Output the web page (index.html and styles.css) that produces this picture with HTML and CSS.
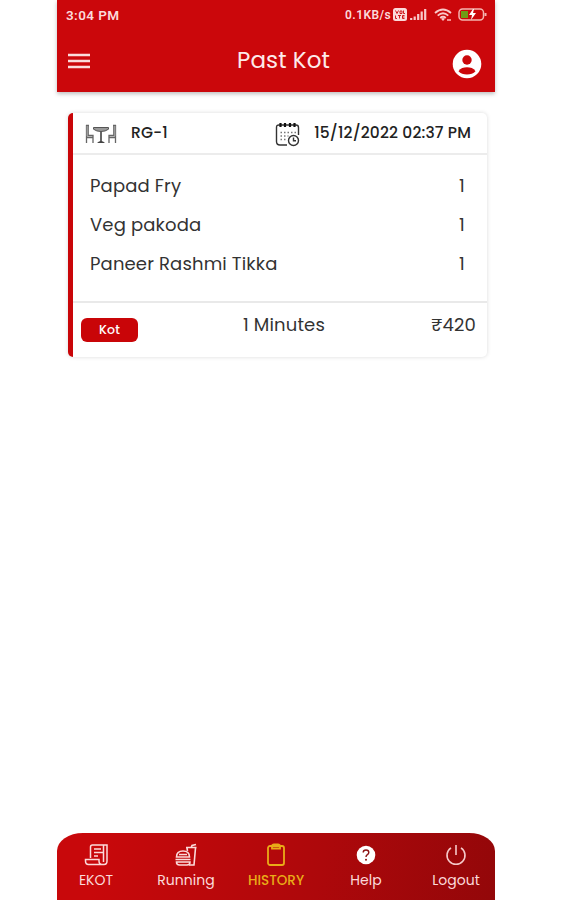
FILE: index.html
```
<!DOCTYPE html>
<html lang="en">
<head>
  <meta charset="UTF-8" />
  <meta name="viewport" content="width=device-width, initial-scale=1" />
  <title>Past Kot</title>
  <link rel="stylesheet" href="styles.css">
</head>
<body>
  <div class="phone">
    <header>
      <div class="status">
        <span class="time">3:04 PM</span>
        <span class="speed">0.1KB/s</span>
        <svg class="volte" width="14" height="13" viewBox="0 0 14 13">
          <rect width="14" height="13" rx="2.5" fill="#fbdada"/>
          <path d="M2.5 2.5l1.500 3 1.500-3M7 3h2v2.500H7zM10.500 2.500v3H12M2.500 7.500v3H4M5 7.500h3M6.500 7.500v3M11.500 7.500h-2v3h2M9.500 9h2" fill="none" stroke="#cb070b" stroke-width=".9"/>
        </svg>
        <svg class="signal" width="17" height="13" viewBox="0 0 17 13">
          <path d="M1.200 10v2M4.700 8.500V12M8.200 6v6M11.700 3.500V12M15.200 1v11" stroke="#f9c9c9" stroke-width="2.200"/>
        </svg>
        <svg class="wifi" width="18" height="14" viewBox="0 0 18 14">
          <path d="M1 5Q9-2 17 5M3.700 7.600Q9 3 14.300 7.600M6.200 10Q9 7.600 11.800 10" fill="none" stroke="#f9c9c9" stroke-width="1.800"/>
          <path d="M9 13l-2-2.200q2-1.600 4 0z" fill="#f9c9c9"/>
          <path d="M13 12h4" stroke="#f58a8a" stroke-width="2"/>
        </svg>
        <svg class="battery" width="30" height="13" viewBox="0 0 30 13">
          <rect x="1" y="1" width="24.500" height="11" rx="3.500" fill="none" stroke="#f4b5b0" stroke-width="1.500"/>
          <path d="M3 3h7v7H3z" fill="#6f9a16"/>
          <path d="M27.500 5v3" stroke="#f4b5b0" stroke-width="2"/>
          <path d="M15 1l-4 6h3l-1 5 5-7h-3l1-4z" fill="#fff"/>
        </svg>
      </div>
      <div class="bar">
        <svg class="menu" width="22" height="16" viewBox="0 0 22 16">
          <path d="M0 2h22M0 8h22M0 14h22" stroke="#fbdcdc" stroke-width="2.700"/>
        </svg>
        <h1>Past Kot</h1>
        <svg class="user" width="30" height="30" viewBox="0 0 30 30">
          <circle cx="15" cy="15" r="14.300" fill="#fff"/>
          <circle cx="15" cy="11" r="4.700" fill="#cb070b"/>
          <path d="M6.500 22.200c2-3 5-3.900 8.500-3.900s6.500.9 8.500 3.900c-2 2.400-5 3.200-8.500 3.200s-6.500-.8-8.500-3.200z" fill="#cb070b"/>
        </svg>
      </div>
    </header>

    <main>
      <div class="card">
        <div class="card-head">
          <svg class="table" width="32" height="20" viewBox="0 0 32 20">
            <g fill="none" stroke="#666" stroke-width="1.300">
              <path d="M1.500 1v18M3.200 2v9M1 1.500h3M2 11.500h6V19M2 13.500h6M30.500 1v18M28.800 2v9M31 1.500h-3M30 11.500h-6V19M30 13.500h-6"/>
              <path d="M16 7v11" stroke-width="2"/>
            </g>
            <path d="M2.300 2v10M29.700 2v10" stroke="#999" stroke-width="1.500"/>
            <path d="M8.500 3.500h15v1.700q-3 2.300-7.500 2.300t-7.500-2.300z" fill="#999" stroke="#555"/>
            <path d="M12 19q4-4 8 0z" fill="#444"/>
          </svg>
          <span class="table-name">RG-1</span>
          <svg class="calendar" width="25" height="25" viewBox="0 0 25 25">
            <g fill="none" stroke="#333" stroke-width="1.400">
              <path d="M12 23H5q-3.500 0-3.500-3.500V5.500Q1.500 3 4 3h17q2.500 0 2.500 2.500V13"/>
              <circle cx="18.500" cy="18.500" r="5"/>
              <path d="M18.500 15.500v3.200H21"/>
            </g>
            <path d="M5.500 1v4M10 1v4M15 1v4M19.500 1v4" stroke="#111" stroke-width="2.200"/>
            <path d="M5.500 10.500H21M5.500 14h8M5.500 17.500h6" stroke="#777" stroke-width="1.500" stroke-dasharray="1.500 2"/>
          </svg>
          <span class="date">15/12/2022 02:37 PM</span>
        </div>
        <ul class="items">
          <li><span>Papad Fry</span><span>1</span></li>
          <li><span>Veg pakoda</span><span>1</span></li>
          <li><span>Paneer Rashmi Tikka</span><span>1</span></li>
        </ul>
        <div class="card-foot">
          <span class="badge">Kot</span>
          <span class="minutes">1 Minutes</span>
          <span class="price">₹420</span>
        </div>
      </div>
    </main>

    <nav>
      <a class="tab">
        <svg width="24" height="24" viewBox="0 0 24 24" fill="none" stroke="#fbdada" stroke-width="1.500">
          <path d="M6.500 15V4q0-2 2-2H23v16q0 3.500-3 3.500H4.500q-3 0-3-3.500v-1.500H15V18q0 3.500 3 3.500"/>
          <path d="M19.500 2v17M10 6h7M10 9.500h9M10 13h4"/>
        </svg>
        <span>EKOT</span>
      </a>
      <a class="tab">
        <svg width="24" height="24" viewBox="0 0 24 24" fill="none" stroke="#fbdada" stroke-width="1.600">
          <path d="M2.500 14q0-6 6.500-6t6.500 6zM1.500 16.500h15M2.500 19h13.500q0 3-3 3H5.500q-3 0-3-3z"/>
          <path d="M5 11.500h8M12 4.500h10.500M13 5l.5 3M21.500 5L20 22h-5M17 5l1-2.500 4-1"/>
        </svg>
        <span>Running</span>
      </a>
      <a class="tab active">
        <svg width="24" height="24" viewBox="0 0 24 24" fill="none" stroke="#e9ac18" stroke-width="1.800">
          <rect x="4" y="3" width="16" height="19" rx="2"/>
          <path d="M8 3v2.500h8V3q0-1.500-2-1.500h-4Q8 1.500 8 3z"/>
        </svg>
        <span>HISTORY</span>
      </a>
      <a class="tab">
        <svg width="24" height="24" viewBox="0 0 24 24">
          <circle cx="12" cy="12" r="9.300" fill="#fff"/>
          <path d="M9.200 9.500Q9.200 7 12 7t2.800 2.500q0 1.300-1.400 2.200T12 14" fill="none" stroke="#8d1414" stroke-width="1.400"/>
          <circle cx="12" cy="16.700" r="1" fill="#8d1414"/>
        </svg>
        <span>Help</span>
      </a>
      <a class="tab">
        <svg width="24" height="24" viewBox="0 0 24 24" fill="none" stroke="#f5caca" stroke-width="1.600">
          <path d="M12 2v10M7 4.800a9 9 0 1 0 10 0"/>
        </svg>
        <span>Logout</span>
      </a>
    </nav>
  </div>
</body>
</html>
```
FILE: styles.css
```
* {
  box-sizing: border-box;
}
body {
  margin: 0;
  background: #fff;
  font-family: "Poppins", Inter, sans-serif;
}
.phone {
  width: 438px;
  height: 900px;
  margin-left: 57px;
  display: flex;
  flex-direction: column;
  white-space: nowrap;
}
header {
  height: 92px;
  background: #cb070b;
  color: #fff;
  box-shadow: 0 2px 4px rgba(0,0,0,0.25);
}
.status {
  height: 29px;
  padding: 0 7px 0 9px;
  display: flex;
  align-items: center;
  font-family: Roboto, sans-serif;
  font-weight: 600;
  color: #fbdada;
}
.time {
  flex: 1;
  font-size: 13.5px;
  letter-spacing: 0.4px;
}
.speed {
  font-size: 12px;
  letter-spacing: 0.4px;
}
.volte {
  margin-left: 2px;
}
.signal {
  margin-left: 3px;
}
.wifi {
  margin-left: 7px;
}
.battery {
  margin-left: 6px;
}
.bar {
  height: 63px;
  padding: 0 13px 0 11px;
  display: flex;
  align-items: center;
}
.bar h1 {
  flex: 1;
  margin: 0 0 2px 25px;
  color: #fdeaea;
  font-size: 23px;
  font-weight: 400;
  letter-spacing: 0.1px;
  text-align: center;
}
.user {
  margin-top: 7px;
}
main {
  flex: 1;
  padding: 21px 8px 0 11px;
}
.card {
  height: 244px;
  border-left: 5px solid #c90508;
  border-radius: 5px;
  box-shadow: 0 0 4px rgba(0,0,0,0.15);
  color: #333;
  font-size: 18px;
  letter-spacing: 0.15px;
}
.card-head {
  height: 42px;
  padding: 0 16px 2px 12px;
  display: flex;
  align-items: center;
  border-bottom: 2px solid #ececec;
  color: #222;
  font-size: 15.5px;
  font-weight: 500;
}
.table {
  margin-top: 3px;
}
.table-name {
  flex: 1;
  margin-left: 14px;
}
.calendar {
  margin: 5px 14px 0 0;
}
.items {
  height: 148px;
  margin: 0;
  padding: 11px 22px 0 17px;
  list-style: none;
  border-bottom: 2px solid #e9e9e9;
}
.items li {
  height: 39px;
  display: flex;
  align-items: center;
  justify-content: space-between;
}
.card-foot {
  height: 43px;
  padding: 0 11px 0 8px;
  display: flex;
  align-items: center;
  justify-content: space-between;
}
.minutes {
  margin-right: 1px;
}
.badge {
  width: 57px;
  height: 24px;
  margin-top: 11px;
  border-radius: 6px;
  background: #c90508;
  color: #fff;
  font-size: 12.5px;
  font-weight: 500;
  line-height: 24px;
  text-align: center;
}
nav {
  height: 67px;
  padding: 10px 0 0;
  display: grid;
  grid-template-columns: 78px 102px 78px 102px 78px;
  background: linear-gradient(100deg, #c8080b 10%, #ad080b 60%, #930709 100%);
  border-radius: 26px 26px 0 0 / 18px 18px 0 0;
}
.tab {
  display: flex;
  flex-direction: column;
  align-items: center;
  gap: 3px;
  color: #fbdada;
  font-size: 14px;
  line-height: 20px;
}
.active {
  color: #e9ac18;
  font-size: 13.5px;
  font-weight: 500;
  line-height: 21px;
}
```
